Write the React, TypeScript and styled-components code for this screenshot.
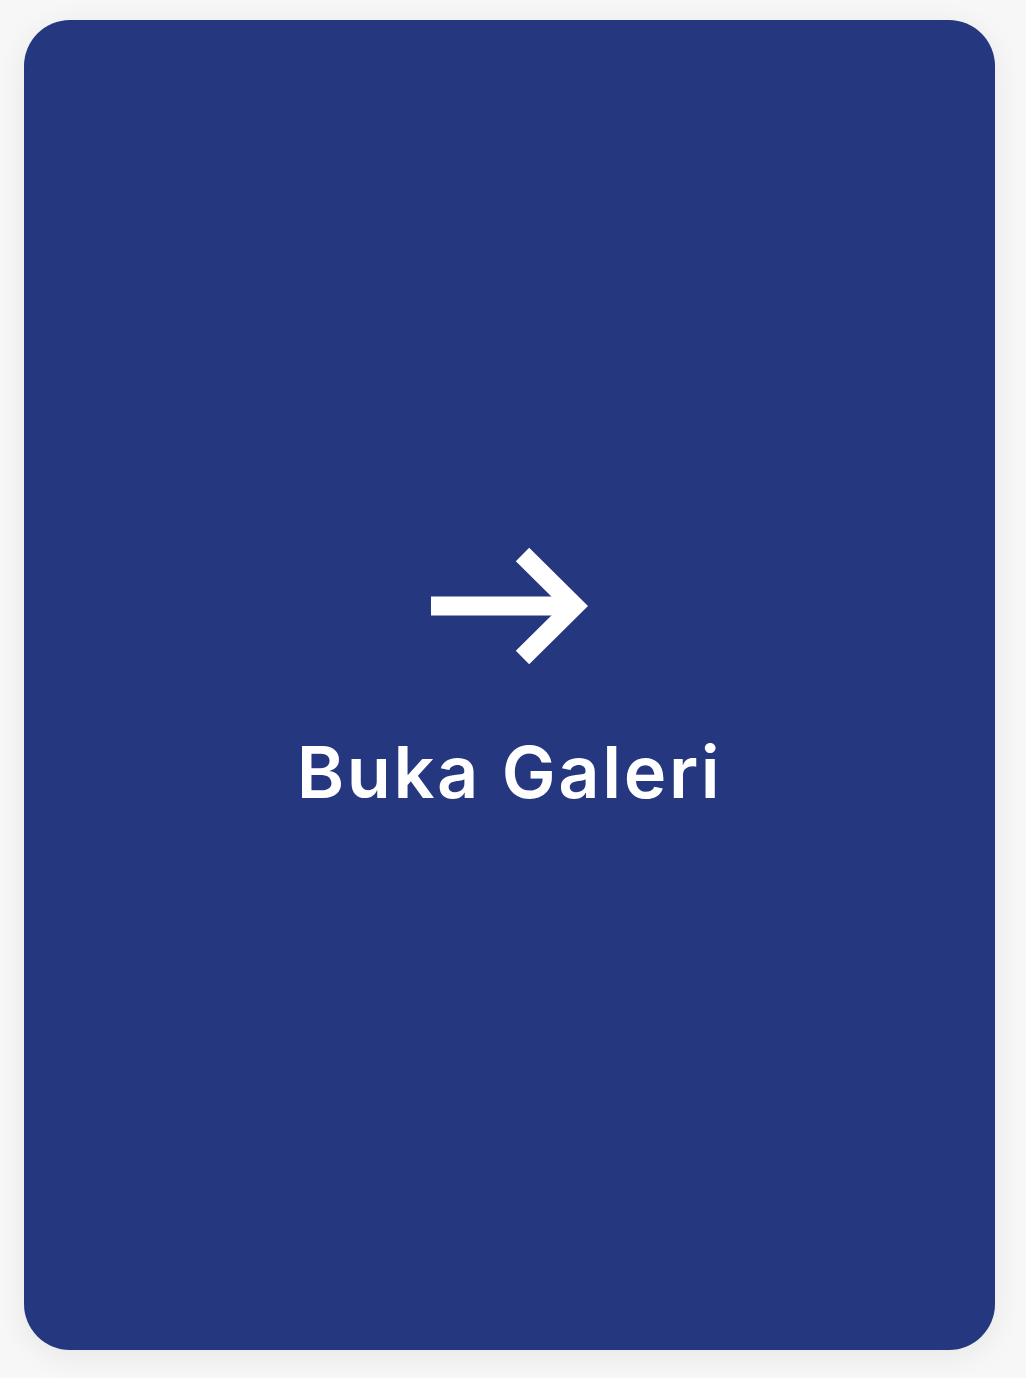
import React from "react";
import styled, { createGlobalStyle } from "styled-components";

const Global = createGlobalStyle`
  html, body { margin: 0; padding: 0; background: #f7f7f7; }
  * { box-sizing: border-box; }
`;

const Page = styled.div`
  padding: 20px 31px 28px 24px;
  font-family: Inter, "Noto Sans", sans-serif;
`;

const Card = styled.a`
  display: flex;
  flex-direction: column;
  align-items: center;
  justify-content: center;
  width: 971px;
  height: 1330px;
  border-radius: 46px;
  background: #25377f;
  box-shadow: 0 6px 30px rgba(0, 0, 0, 0.07);
  color: #ffffff;
  text-decoration: none;
`;

const Content = styled.div`
  display: flex;
  flex-direction: column;
  align-items: center;
  gap: 71px;
  margin-top: -15px;
`;

const Label = styled.span`
  font-size: 72px;
  font-weight: 600;
  line-height: 1;
  letter-spacing: 2.6px;
`;

const Arrow = () => (
  <svg width="157" height="118" viewBox="0 0 157 118" fill="none">
    <path d="M0 59 H143" stroke="#fff" strokeWidth="19" />
    <path
      d="M91.5 7.5 L143.5 59 L91.5 110.5"
      stroke="#fff"
      strokeWidth="19"
      strokeLinecap="butt"
      strokeLinejoin="miter"
    />
  </svg>
);

export default function App() {
  return (
    <>
      <Global />
      <Page>
        <Card href="#">
          <Content>
            <Arrow />
            <Label>Buka Galeri</Label>
          </Content>
        </Card>
      </Page>
    </>
  );
}
